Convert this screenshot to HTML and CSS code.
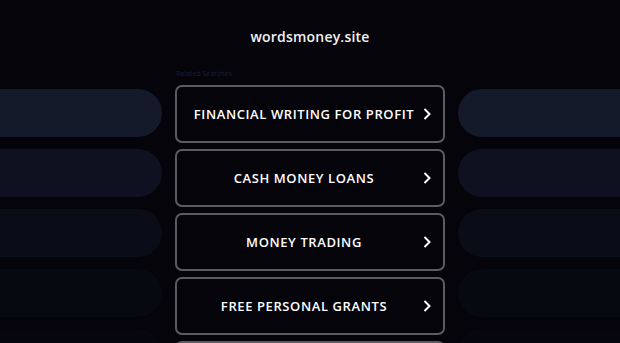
FILE: index.html
```html
<!DOCTYPE html>
<html lang="en">
<head>
  <meta charset="UTF-8">
  <meta name="viewport" content="width=device-width, initial-scale=1.0">
  <title>wordsmoney.site</title>
  <link rel="stylesheet" href="styles.css">
</head>
<body>
  <header id="top"><h1>wordsmoney.site</h1></header>
  <div id="layout">
    <div class="side side-left">
      <div class="pill p1"></div>
      <div class="pill p2"></div>
      <div class="pill p3"></div>
      <div class="pill p4"></div>
      <div class="pill p5"></div>
    </div>
    <div id="links">
      <div class="label">Related Searches</div>
      <a class="link" href="#"><span>FINANCIAL WRITING FOR PROFIT</span><svg width="8" height="12" viewBox="0 0 8 12"><polyline points="1.5,1 6.5,6 1.5,11" fill="none" stroke="#fff" stroke-width="2"/></svg></a>
      <a class="link" href="#"><span>CASH MONEY LOANS</span><svg width="8" height="12" viewBox="0 0 8 12"><polyline points="1.5,1 6.5,6 1.5,11" fill="none" stroke="#fff" stroke-width="2"/></svg></a>
      <a class="link" href="#"><span>MONEY TRADING</span><svg width="8" height="12" viewBox="0 0 8 12"><polyline points="1.5,1 6.5,6 1.5,11" fill="none" stroke="#fff" stroke-width="2"/></svg></a>
      <a class="link" href="#"><span>FREE PERSONAL GRANTS</span><svg width="8" height="12" viewBox="0 0 8 12"><polyline points="1.5,1 6.5,6 1.5,11" fill="none" stroke="#fff" stroke-width="2"/></svg></a>
      <a class="link" href="#"><span>ONLINE MONEY</span><svg width="8" height="12" viewBox="0 0 8 12"><polyline points="1.5,1 6.5,6 1.5,11" fill="none" stroke="#fff" stroke-width="2"/></svg></a>
    </div>
    <div class="side side-right">
      <div class="pill p1"></div>
      <div class="pill p2"></div>
      <div class="pill p3"></div>
      <div class="pill p4"></div>
      <div class="pill p5"></div>
    </div>
  </div>
</body>
</html>
```

FILE: styles.css
```css
* { box-sizing: border-box; }
html, body { height: 100%; }
body {
  margin: 0;
  background: #04040a;
  color: #fff;
  font-family: 'Open Sans', 'Noto Sans', sans-serif;
  overflow: hidden;
}
#top { padding-top: 27px; height: 64px; }
#top h1 {
  margin: 0;
  font-size: 14px; line-height: 20px;
  font-weight: 600;
  letter-spacing: 0.2px;
  text-align: center;
  color: #f2f2f2;
}
#layout {
  display: grid;
  grid-template-columns: 162px 270px 162px;
  column-gap: 13px;
}
.side {
  display: flex; flex-direction: column;
  gap: 12px; padding-top: 25px;
}
.pill { height: 48px; }
.side-left .pill { border-radius: 0 24px 24px 0; }
.side-right .pill { border-radius: 24px 0 0 24px; }
.p1 { background: #151a2b; }
.p2 { background: #0e1120; }
.p3 { background: #0a0c17; }
.p4 { background: #070910; }
.p5 { background: #06070e; }
#links {
  display: flex; flex-direction: column;
  gap: 6px; padding-top: 5px;
}
.label {
  font-size: 7px; line-height: 10px;
  color: #1c1f38;
  padding-left: 1px;
}
.link {
  display: flex; align-items: center;
  height: 58px;
  padding: 0 12px 0 0;
  border: 2px solid #5c5c60;
  border-radius: 7px;
  color: #fff;
  text-decoration: none;
}
.link span {
  flex: 1;
  padding-left: 8px;
  text-align: center;
  font-size: 13px; font-weight: 600;
  letter-spacing: 0.6px;
  white-space: nowrap;
}
.link svg { display: block; }
```
